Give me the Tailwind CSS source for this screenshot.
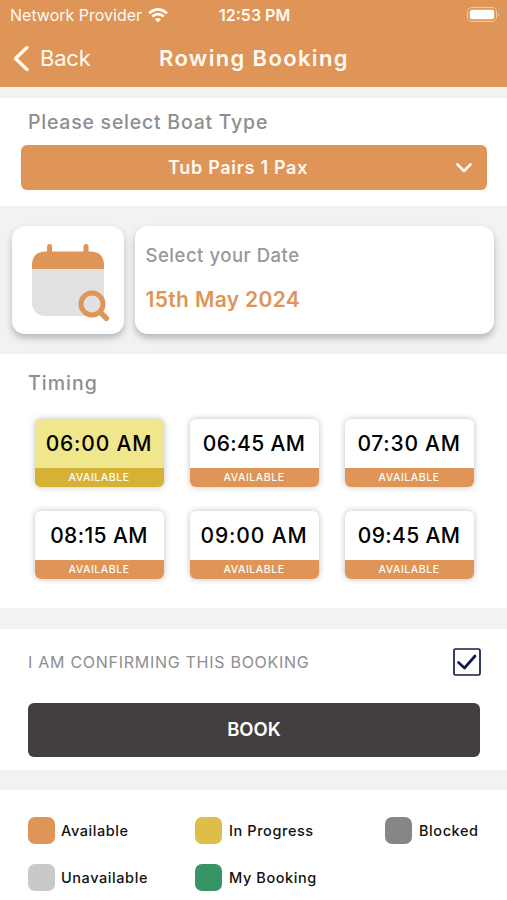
<!DOCTYPE html>
<html lang="en">
<head>
<meta charset="utf-8">
<title>Rowing Booking</title>
<script src="https://cdn.jsdelivr.net/npm/@tailwindcss/browser@4"></script>
</head>
<body class="w-[507px] h-[900px] overflow-hidden bg-[#f2f2f2] font-['Inter',sans-serif] whitespace-nowrap">
<header class="h-[87px] bg-[#de9557] text-[#fffaf3]">
  <div class="h-[30px] grid grid-cols-[218px_1fr_auto] items-center pl-[10px] pr-[7px] text-[16px]">
    <div class="flex items-center gap-[6px]">
      <span>Network Provider</span>
      <svg class="w-[20px] h-[15px]" viewBox="0 0 20 15" fill="none" stroke="#fffaf3" stroke-width="2.700"><path d="M1 5.200Q10-2.600 19 5.200M4.200 8.600Q10 3.600 15.800 8.600"/><path d="M10 14.400 6.900 11.300Q10 8.700 13.100 11.300Z" fill="#fffaf3" stroke="none"/></svg>
    </div>
    <div class="font-semibold text-[16px] -ml-[9px]">12:53 PM</div>
    <svg class="w-[34px] h-[17px] -mt-[2px]" viewBox="0 0 34 17"><rect x="1.500" y="1.500" width="29" height="14" rx="4.500" fill="none" stroke="#efc9a6"/><rect x="3.800" y="3.800" width="24.400" height="9.500" rx="2.500" fill="#fff"/><path d="M32 6.500q2 2 0 4" fill="#efc9a6"/></svg>
  </div>
  <div class="h-[56px] grid grid-cols-[146px_1fr] items-center pl-[13px]">
    <div class="flex items-center gap-[10px] text-[22px] tracking-[-0.200px]">
      <svg class="w-[17px] h-[27px]" viewBox="0 0 17 27" fill="none" stroke="#fffaf3" stroke-width="3.400" stroke-linecap="round" stroke-linejoin="round"><path d="M14 2.500 2.500 13.500 14 24.500"/></svg>
      <span>Back</span>
    </div>
    <h1 class="text-[22px] font-semibold tracking-[1.350px]">Rowing Booking</h1>
  </div>
</header>
<main>
  <section class="mt-[11px] h-[108px] bg-white px-[21px] pt-[9px]">
    <h2 class="pl-[7px] h-[30px] leading-[30px] text-[19.500px] font-medium tracking-[0.760px] text-[#8e8e90]">Please select Boat Type</h2>
    <div class="mt-[8px] w-[466px] h-[45px] rounded-[6px] bg-[#de9557] text-[#fffaf3] flex items-center justify-between pl-[147px] pr-[15px]">
      <span class="text-[18px] font-semibold tracking-[0.700px]">Tub Pairs 1 Pax</span>
      <svg class="w-[16px] h-[10px]" viewBox="0 0 16 10" fill="none" stroke="#fffaf3" stroke-width="2.600" stroke-linecap="round" stroke-linejoin="round"><path d="m1.500 1.500 6.500 6.500 6.500-6.500"/></svg>
    </div>
  </section>
  <section class="h-[148px] flex gap-[11px] px-[12px] pt-[20px]">
    <div class="w-[112px] h-[108px] rounded-[13px] bg-white shadow-[0_4px_7px_rgba(0,0,0,0.25)]">
      <svg class="w-[112px] h-[108px]" viewBox="12 226 112 108"><path d="M32 269h72v34a13 13 0 0 1-13 13H45a13 13 0 0 1-13-13Z" fill="#e1e1e1"/><path d="M32 269v-4c0-9 5-13.500 14-13.500h44c9 0 14 4.500 14 13.500v4Z" fill="#de9557"/><path d="M49.500 254v-7.500M86 254v-7.500" stroke="#de9557" stroke-width="5" stroke-linecap="round"/><circle cx="92" cy="304" r="11" fill="#e1e1e1" stroke="#de9557" stroke-width="5"/><path d="m100.500 312.500 5.800 5.800" stroke="#de9557" stroke-width="5.500" stroke-linecap="round"/></svg>
    </div>
    <div class="w-[359px] h-[108px] rounded-[13px] bg-white shadow-[0_4px_7px_rgba(0,0,0,0.25)] pl-[10.500px] pt-[15px]">
      <p class="h-[28px] leading-[28px] text-[18.500px] font-medium tracking-[0.520px] text-[#98989a]">Select your Date</p>
      <p class="mt-[16px] h-[30px] leading-[30px] text-[21px] font-semibold tracking-[0.350px] text-[#de9557]">15th May 2024</p>
    </div>
  </section>
  <section class="h-[254px] bg-white pt-[14px]">
    <h2 class="pl-[28px] h-[30px] leading-[30px] text-[19.500px] font-medium tracking-[1.050px] text-[#8e8e90]">Timing</h2>
    <div class="mt-[21px] ml-[34.500px] grid grid-cols-[129px_129px_129px] gap-x-[26px] gap-y-[24px] text-center text-[21px] font-medium text-black">
      <div class="h-[68px] rounded-[6px] overflow-hidden bg-[#f0e68c] shadow-[0_0_6px_rgba(0,0,0,0.25)]"><div class="h-[49px] leading-[49px] tracking-[0.850px]">06:00 AM</div><div class="h-[19px] leading-[19px] bg-[#d5b236] text-[#fffaf3] text-[10.500px] tracking-[0.550px]">AVAILABLE</div></div>
      <div class="h-[68px] rounded-[6px] overflow-hidden bg-white shadow-[0_0_6px_rgba(0,0,0,0.25)]"><div class="h-[49px] leading-[49px] tracking-[0.350px]">06:45 AM</div><div class="h-[19px] leading-[19px] bg-[#de9557] text-[#fffaf3] text-[10.500px] tracking-[0.550px]">AVAILABLE</div></div>
      <div class="h-[68px] rounded-[6px] overflow-hidden bg-white shadow-[0_0_6px_rgba(0,0,0,0.25)]"><div class="h-[49px] leading-[49px] tracking-[0.750px]">07:30 AM</div><div class="h-[19px] leading-[19px] bg-[#de9557] text-[#fffaf3] text-[10.500px] tracking-[0.550px]">AVAILABLE</div></div>
      <div class="h-[68px] rounded-[6px] overflow-hidden bg-white shadow-[0_0_6px_rgba(0,0,0,0.25)]"><div class="h-[49px] leading-[49px] tracking-[0.400px]">08:15 AM</div><div class="h-[19px] leading-[19px] bg-[#de9557] text-[#fffaf3] text-[10.500px] tracking-[0.550px]">AVAILABLE</div></div>
      <div class="h-[68px] rounded-[6px] overflow-hidden bg-white shadow-[0_0_6px_rgba(0,0,0,0.25)]"><div class="h-[49px] leading-[49px] tracking-[0.900px]">09:00 AM</div><div class="h-[19px] leading-[19px] bg-[#de9557] text-[#fffaf3] text-[10.500px] tracking-[0.550px]">AVAILABLE</div></div>
      <div class="h-[68px] rounded-[6px] overflow-hidden bg-white shadow-[0_0_6px_rgba(0,0,0,0.25)]"><div class="h-[49px] leading-[49px] tracking-[0.350px]">09:45 AM</div><div class="h-[19px] leading-[19px] bg-[#de9557] text-[#fffaf3] text-[10.500px] tracking-[0.550px]">AVAILABLE</div></div>
    </div>
  </section>
  <section class="mt-[21px] h-[141px] bg-white px-[28px] pt-[19px]">
    <div class="flex w-[453px] h-[28px] items-center justify-between">
      <span class="text-[16px] tracking-[0.720px] text-[#8e8e90]">I AM CONFIRMING THIS BOOKING</span>
      <svg class="w-[28px] h-[28px]" viewBox="0 0 28 28" fill="none" stroke="#101b4d"><rect x="1" y="1" width="26" height="26" rx="1.500" stroke-width="1.700"/><path d="m5.500 14.500 6 5.500L22 8" stroke-width="2.700" stroke-linecap="round" stroke-linejoin="round"/></svg>
    </div>
    <button class="mt-[27px] block w-[452px] h-[54px] rounded-[6px] bg-[#433f40] text-white text-[18.500px] font-semibold">BOOK</button>
  </section>
  <section class="mt-[20px] h-[110px] bg-white pl-[28px] pt-[27px] grid grid-cols-[167px_190px_1fr] grid-rows-[27px_27px] gap-y-[20px] text-[14.500px] font-medium tracking-[0.580px] text-[#111]">
    <div class="flex items-center gap-[6px]"><i class="size-[27px] rounded-[7px] bg-[#de9557]"></i><span>Available</span></div>
    <div class="flex items-center gap-[7px]"><i class="size-[27px] rounded-[7px] bg-[#debd48]"></i><span>In Progress</span></div>
    <div class="flex items-center gap-[7px]"><i class="size-[27px] rounded-[7px] bg-[#868686]"></i><span>Blocked</span></div>
    <div class="flex items-center gap-[6px]"><i class="size-[27px] rounded-[7px] bg-[#c9c9c9]"></i><span>Unavailable</span></div>
    <div class="flex items-center gap-[7px]"><i class="size-[27px] rounded-[7px] bg-[#379466]"></i><span>My Booking</span></div>
  </section>
</main>
</body>
</html>
